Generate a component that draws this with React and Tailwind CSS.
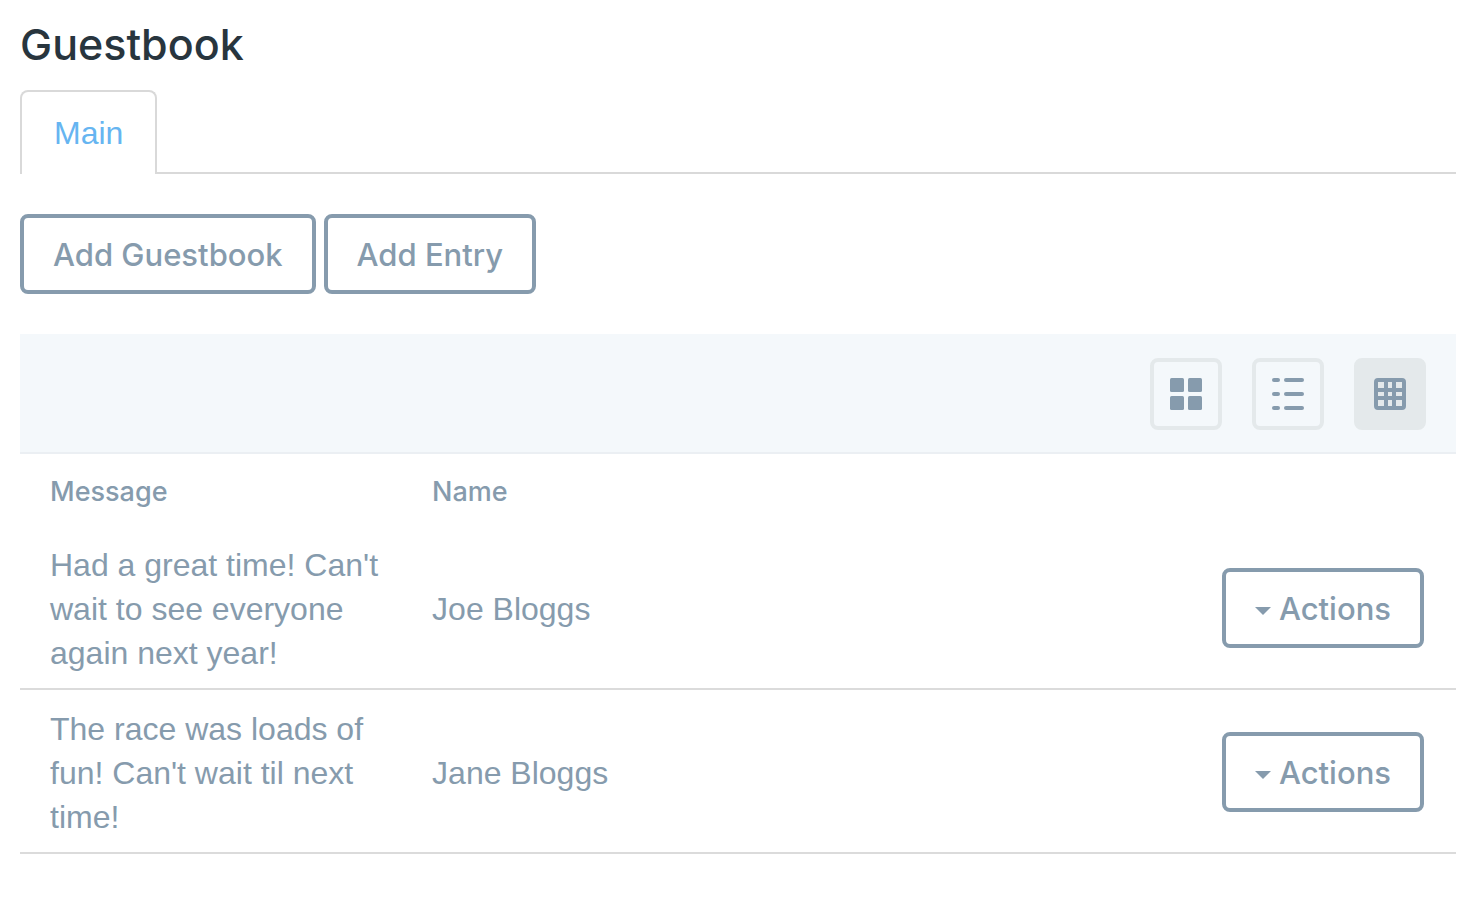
const entries = [
  { message: "Had a great time! Can't wait to see everyone again next year!", name: 'Joe Bloggs' },
  { message: "The race was loads of fun! Can't wait til next time!", name: 'Jane Bloggs' },
];

function CardsIcon() {
  return (
    <svg width="32" height="32" viewBox="0 0 32 32" fill="currentColor" aria-hidden="true">
      <rect x="0" y="0" width="14" height="14" rx="1.5" />
      <rect x="18" y="0" width="14" height="14" rx="1.5" />
      <rect x="0" y="18" width="14" height="14" rx="1.5" />
      <rect x="18" y="18" width="14" height="14" rx="1.5" />
    </svg>
  );
}

function ListIcon() {
  return (
    <svg width="32" height="32" viewBox="0 0 32 32" fill="currentColor" aria-hidden="true">
      {[0, 14, 28].map((y) => (
        <g key={y}>
          <rect x="0" y={y} width="8" height="4" rx="2" />
          <rect x="12" y={y} width="20" height="4" rx="2" />
        </g>
      ))}
    </svg>
  );
}

function TableIcon() {
  return (
    <svg width="32" height="32" viewBox="0 0 32 32" fill="currentColor" aria-hidden="true">
      <path
        fillRule="evenodd"
        d="M4 0h24a4 4 0 0 1 4 4v24a4 4 0 0 1-4 4H4a4 4 0 0 1-4-4V4a4 4 0 0 1 4-4ZM4 4v6h6V4ZM14 4v6h4V4ZM22 4v6h6V4ZM4 14v4h6v-4ZM14 14v4h4v-4ZM22 14v4h6v-4ZM4 22v6h6v-6ZM14 22v6h4v-6ZM22 22v6h6v-6Z"
      />
    </svg>
  );
}

function OutlineButton({ children }) {
  return (
    <button
      type="button"
      className="flex h-20 items-center rounded-lg border-4 border-[#869bad] bg-white px-[29px] pt-0.5 font-['Inter','Liberation_Sans',sans-serif] text-[31px] leading-[44px] font-medium whitespace-nowrap text-[#869bad]"
    >
      {children}
    </button>
  );
}

function ViewButton({ label, active = false, children }) {
  return (
    <button
      type="button"
      aria-label={label}
      aria-pressed={active}
      className={
        active
          ? 'flex size-[72px] items-center justify-center rounded-lg border-4 border-[#e4e9eb] bg-[#e4e9eb]'
          : 'flex size-[72px] items-center justify-center rounded-lg border-4 border-[#e4e9eb]'
      }
    >
      {children}
    </button>
  );
}

export default function App() {
  return (
    <main className="min-h-screen bg-white pr-[18px] pl-5 font-['Liberation_Sans',Arial,sans-serif] text-[32px] leading-[44px] text-[#869bad]">
      <h1 className="pt-4 pb-[18px] font-['Inter','Liberation_Sans',sans-serif] text-[43px] leading-[56px] font-medium text-[#28353e]">
        Guestbook
      </h1>
      <nav className="flex border-b-2 border-[#d9d9d9]">
        <a
          href="#main"
          aria-current="page"
          className="-mb-0.5 flex h-[84px] items-center rounded-t-lg border-2 border-b-0 border-[#d9d9d9] bg-white px-8 text-[#66b5f1]"
        >
          Main
        </a>
      </nav>
      <div className="flex gap-2 py-10">
        <OutlineButton>Add Guestbook</OutlineButton>
        <OutlineButton>Add Entry</OutlineButton>
      </div>
      <div className="flex justify-end gap-[30px] border-b-2 border-[#ebeff3] bg-[#f4f8fb] px-[30px] pt-6 pb-[22px]">
        <ViewButton label="Cards view"><CardsIcon /></ViewButton>
        <ViewButton label="List view"><ListIcon /></ViewButton>
        <ViewButton label="Table view" active><TableIcon /></ViewButton>
      </div>
      <table className="w-full table-fixed border-collapse text-left">
        <thead>
          <tr className="h-[72px] font-['Inter','Liberation_Sans',sans-serif] text-[27px]">
            <th className="w-[28%] pt-1 pl-[30px] font-medium">Message</th>
            <th className="pt-1 pl-[10px] font-medium">Name</th>
            <th className="w-[264px]" aria-label="Actions"></th>
          </tr>
        </thead>
        <tbody>
          {entries.map((entry) => (
            <tr key={entry.name} className="border-b-2 border-[#dbdbdb]">
              <td className="pt-[17px] pr-[15px] pb-[13px] pl-[30px]">{entry.message}</td>
              <td className="pt-1 pl-[10px]">{entry.name}</td>
              <td className="pt-0.5 pr-8">
                <div className="flex justify-end">
                  <OutlineButton>
                    <svg className="mt-1 mr-2" width="16" height="8" viewBox="0 0 16 8" fill="currentColor" aria-hidden="true">
                      <path d="M0 0h16L8 8Z" />
                    </svg>
                    Actions
                  </OutlineButton>
                </div>
              </td>
            </tr>
          ))}
        </tbody>
      </table>
    </main>
  );
}
